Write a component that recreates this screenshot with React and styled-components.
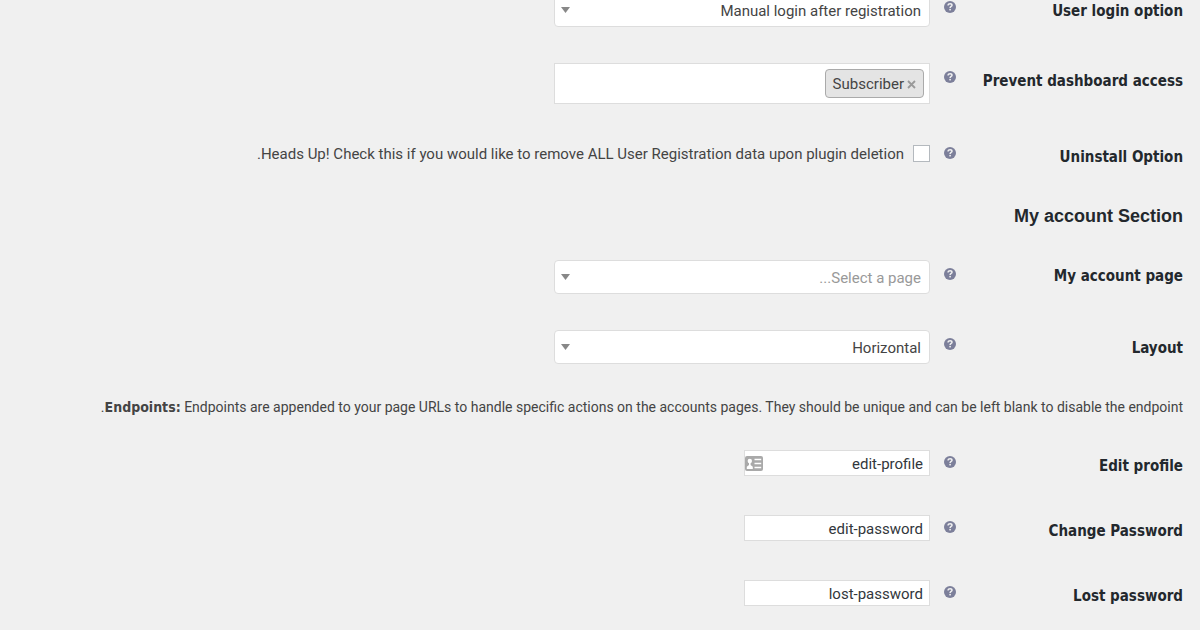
import React, { useState } from "react";
import styled, { createGlobalStyle } from "styled-components";

const GlobalStyle = createGlobalStyle`
  * {
    box-sizing: border-box;
  }

  body {
    margin: 0;
    background: #f0f0f0;
    color: #444;
    font-family: Roboto, "Noto Sans", sans-serif;
    font-size: 15px;
    line-height: 20px;
    overflow: hidden;
  }
`;

const Page = styled.main`
  margin-top: -7px;
  padding: 0 17px 24px;
`;

const Section = styled.section`
  display: flex;
  flex-direction: column;
  gap: ${(props) => props.$gap || 36}px;
`;

const SettingRow = styled.div`
  display: grid;
  grid-template-columns: 227px 12px minmax(0, 1fr);
  align-items: start;
  padding-top: ${(props) => (props.$spaced ? 5 : 0)}px;
`;

const SettingLabel = styled.label`
  padding-top: ${(props) => props.$top || 8}px;
  color: #23282d;
  font-family: "DejaVu Sans Condensed", "Noto Sans", sans-serif;
  font-weight: 700;
`;

const HelpButton = styled.button`
  display: flex;
  margin-top: ${(props) => props.$top}px;
  padding: 0;
  border: 0;
  background: none;
  cursor: help;
`;

const Field = styled.div`
  padding-inline-start: 14px;
`;

const SelectWrap = styled.div`
  position: relative;
  width: 376px;
  max-width: 100%;
`;

const Select = styled.select`
  display: block;
  width: 100%;
  height: 34px;
  padding: 2px 8px 0;
  appearance: none;
  border: 1px solid #ddd;
  border-radius: 4px;
  background: #fff;
  color: ${(props) => (props.$empty ? "#999" : "#444")};
  font: inherit;
`;

const Arrow = styled.svg`
  position: absolute;
  inset-inline-end: 7px;
  top: 14px;
  pointer-events: none;
`;

const TagBox = styled.div`
  display: flex;
  width: 376px;
  max-width: 100%;
  padding: 5px;
  border: 1px solid #ddd;
  background: #fff;
`;

const Tag = styled.span`
  display: flex;
  align-items: center;
  gap: 3px;
  height: 29px;
  padding: 0 7px;
  border: 1px solid #aaa;
  border-radius: 4px;
  background: #e4e4e4;
`;

const RemoveButton = styled.button`
  display: flex;
  padding: 2px 0 0;
  border: 0;
  background: none;
  cursor: pointer;
`;

const CheckLabel = styled.label`
  display: flex;
  align-items: center;
  gap: 9px;
  height: 17px;
`;

const Checkbox = styled.input`
  width: 17px;
  height: 17px;
  margin: 0;
  appearance: none;
  border: 1px solid #b4b9be;
  background: #fff;

  &:checked {
    background: #7e8993;
  }
`;

const SectionTitle = styled.h2`
  margin: 39px 0 34px;
  color: #23282d;
  font-family: "Liberation Sans", Arial, sans-serif;
  font-size: 18px;
  line-height: 20px;
`;

const Description = styled.p`
  margin: 33px 0;
  font-size: 14px;

  strong {
    font-family: "DejaVu Sans Condensed", "Noto Sans", sans-serif;
  }
`;

const InputWrap = styled.div`
  position: relative;
  width: 186px;
`;

const TextInput = styled.input`
  display: block;
  width: 100%;
  height: 26px;
  padding: 2px 6px 0;
  border: 1px solid #ddd;
  background: #fff;
  color: #32373c;
  font: inherit;
`;

const CardIcon = styled.svg`
  position: absolute;
  inset-inline-end: 1px;
  top: 6px;
`;

const Help = ({ top, about }) => (
  <HelpButton type="button" aria-label={`Help: ${about}`} $top={top}>
    <svg width="12" height="12" viewBox="0 0 12 12">
      <circle cx="6" cy="6" r="6" fill="#7c7f9a" />
      <path
        d="M4.1 4.6C4.1 3.3 5 2.7 6.1 2.7S8 3.3 8 4.3C8 5.5 6.1 5.5 6.1 7"
        fill="none"
        stroke="#f0f0f0"
        strokeWidth="1.5"
      />
      <rect x="5.3" y="7.9" width="1.6" height="1.5" fill="#f0f0f0" />
    </svg>
  </HelpButton>
);

const SelectSetting = ({ id, label, options, empty }) => (
  <SettingRow>
    <SettingLabel htmlFor={id} $top={empty ? 6 : 8}>
      {label}
    </SettingLabel>
    <Help top={8} about={label} />
    <Field>
      <SelectWrap>
        <Select id={id} $empty={empty}>
          {options.map((option) => (
            <option key={option}>{option}</option>
          ))}
        </Select>
        <Arrow width="9" height="6" viewBox="0 0 9 6">
          <path d="M0 0H9L4.5 6Z" fill="#888" />
        </Arrow>
      </SelectWrap>
    </Field>
  </SettingRow>
);

const TextSetting = ({ id, label, value, card }) => (
  <SettingRow>
    <SettingLabel htmlFor={id} $top={6}>
      {label}
    </SettingLabel>
    <Help top={6} about={label} />
    <Field>
      <InputWrap>
        <TextInput id={id} type="text" defaultValue={value} />
        {card && (
          <CardIcon width="18" height="15" viewBox="0 0 18 15">
            <rect width="18" height="15" rx="2" fill="#a9a9a9" />
            <circle cx="4.8" cy="5" r="2.2" fill="#fff" />
            <path d="M1.8 13V10.8L4 9V6.5H5.6V9L7.8 10.8V13Z" fill="#fff" />
            <path d="M9.5 3.5H16.2M9.5 7.5H16.2M9.5 11.5H16.2" stroke="#fff" strokeWidth="1.7" />
          </CardIcon>
        )}
      </InputWrap>
    </Field>
  </SettingRow>
);

const App = () => {
  const [roles, setRoles] = useState(["Subscriber"]);

  const removeRole = (role) => {
    setRoles(roles.filter((item) => item !== role));
  };

  return (
    <>
      <GlobalStyle />
      <Page dir="rtl">
        <Section>
          <SelectSetting
            id="login-option"
            label="User login option"
            options={["Manual login after registration", "Auto login after registration"]}
          />
          <SettingRow>
            <SettingLabel as="span">Prevent dashboard access</SettingLabel>
            <Help top={8} about="Prevent dashboard access" />
            <Field>
              <TagBox>
                {roles.map((role) => (
                  <Tag key={role}>
                    <RemoveButton
                      type="button"
                      aria-label={`Remove ${role}`}
                      onClick={() => removeRole(role)}
                    >
                      <svg width="9" height="9" viewBox="0 0 9 9">
                        <path d="M1 1L8 8M8 1L1 8" stroke="#999" strokeWidth="1.8" />
                      </svg>
                    </RemoveButton>
                    {role}
                  </Tag>
                ))}
              </TagBox>
            </Field>
          </SettingRow>
          <SettingRow $spaced>
            <SettingLabel as="span" $top={2}>
              Uninstall Option
            </SettingLabel>
            <Help top={2} about="Uninstall Option" />
            <Field>
              <CheckLabel>
                <Checkbox type="checkbox" />
                Heads Up! Check this if you would like to remove ALL User Registration data upon
                plugin deletion.
              </CheckLabel>
            </Field>
          </SettingRow>
        </Section>

        <SectionTitle>My account Section</SectionTitle>
        <Section>
          <SelectSetting
            id="account-page"
            label="My account page"
            options={["Select a page..."]}
            empty
          />
          <SelectSetting id="layout" label="Layout" options={["Horizontal", "Vertical"]} />
        </Section>

        <Description>
          <strong>Endpoints:</strong> Endpoints are appended to your page URLs to handle specific
          actions on the accounts pages. They should be unique and can be left blank to disable the
          endpoint.
        </Description>
        <Section $gap={39}>
          <TextSetting id="edit-profile" label="Edit profile" value="edit-profile" card />
          <TextSetting id="edit-password" label="Change Password" value="edit-password" />
          <TextSetting id="lost-password" label="Lost password" value="lost-password" />
        </Section>
      </Page>
    </>
  );
};

export default App;
